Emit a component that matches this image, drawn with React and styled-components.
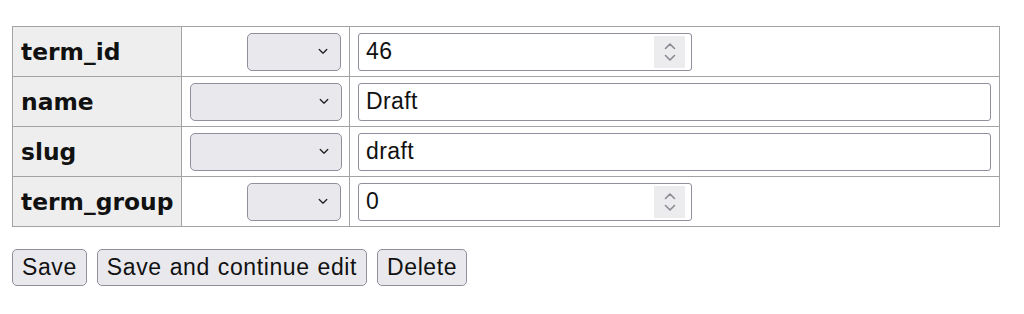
import styled, { createGlobalStyle } from 'styled-components';

const rows = [
  { field: 'term_id', value: '46', kind: 'number' },
  { field: 'name', value: 'Draft', kind: 'text' },
  { field: 'slug', value: 'draft', kind: 'text' },
  { field: 'term_group', value: '0', kind: 'number' },
];

const Chevron = ({ up }) => (
  <svg width="12" height="8" viewBox="0 0 12 8">
    <path
      d={up ? 'M1.5 6.5 L6 2 L10.5 6.5' : 'M1.5 1.5 L6 6 L10.5 1.5'}
      fill="none"
      stroke="currentColor"
      strokeWidth="1.6"
      strokeLinecap="round"
      strokeLinejoin="round"
    />
  </svg>
);

const App = () => {
  return (
    <Page>
      <GlobalStyle />
      <Grid>
        <tbody>
          {rows.map((row) => (
            <tr key={row.field}>
              <Label>{row.field}</Label>
              <OpCell>
                <Select $wide={row.kind === 'text'}>
                  <Caret>
                    <Chevron />
                  </Caret>
                </Select>
              </OpCell>
              <ValueCell>
                <Field $wide={row.kind === 'text'}>
                  <span>{row.value}</span>
                  {row.kind === 'number' && (
                    <Spinner>
                      <Chevron up />
                      <Chevron />
                    </Spinner>
                  )}
                </Field>
              </ValueCell>
            </tr>
          ))}
        </tbody>
      </Grid>
      <Actions>
        <Button>Save</Button>
        <Button>Save and continue edit</Button>
        <Button>Delete</Button>
      </Actions>
    </Page>
  );
};

const GlobalStyle = createGlobalStyle`
  body {
    margin: 0;
    background: #fff;
    font-family: "Liberation Sans", Arial, sans-serif;
  }
`;

const Page = styled.div`
  padding: 26px 12px;
`;

const Grid = styled.table`
  width: 988px;
  table-layout: fixed;
  border-collapse: collapse;
  border: 1px solid #a3a3a3;
`;

const Label = styled.th`
  width: 152px;
  height: 39px;
  padding: 5px 8px;
  border: 1px solid #a3a3a3;
  background: #eeeeee;
  text-align: left;
  white-space: nowrap;
  font-family: "DejaVu Sans", Verdana, sans-serif;
  font-weight: bold;
  font-size: 23.4px;
  color: #111;
`;

const OpCell = styled.td`
  width: 151px;
  padding: 5px 8px;
  border: 1px solid #a3a3a3;
  text-align: right;
`;

const ValueCell = styled.td`
  padding: 5px 8px;
  border: 1px solid #a3a3a3;
`;

const Select = styled.div`
  display: inline-flex;
  align-items: center;
  justify-content: flex-end;
  box-sizing: border-box;
  width: ${(p) => (p.$wide ? '152px' : '94px')};
  height: 38px;
  padding-right: 12px;
  background: #e9e9ed;
  border: 1px solid #8f8f9d;
  border-radius: 5px;
  vertical-align: middle;
`;

const Caret = styled.span`
  display: flex;
  color: #222;
  svg {
    width: 10px;
    height: 7px;
  }
`;

const Field = styled.div`
  display: flex;
  align-items: center;
  justify-content: space-between;
  box-sizing: border-box;
  width: ${(p) => (p.$wide ? '633px' : '334px')};
  height: 38px;
  padding: 0 6px 0 7px;
  border: 1px solid #8f8f9d;
  border-radius: 3px;
  background: #fff;
  font-size: 23px;
  letter-spacing: 0.4px;
  color: #111;
`;

const Spinner = styled.span`
  display: flex;
  flex-direction: column;
  align-items: center;
  justify-content: center;
  gap: 4px;
  width: 31px;
  height: 32px;
  background: #ececef;
  color: #8a8a92;
`;

const Actions = styled.div`
  display: flex;
  gap: 10px;
  margin-top: 22px;
`;

const Button = styled.button`
  height: 37px;
  padding: 0 9px;
  background: #e9e9ed;
  border: 1px solid #8f8f9d;
  border-radius: 5px;
  font-family: "Liberation Sans", Arial, sans-serif;
  font-size: 23px;
  letter-spacing: 0.6px;
  word-spacing: 1px;
  color: #111;
`;

export default App;
